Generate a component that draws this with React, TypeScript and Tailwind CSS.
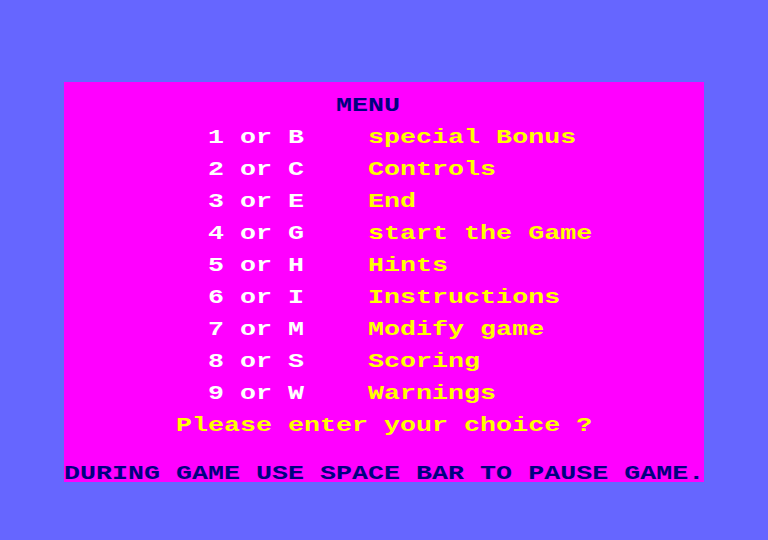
type Seg = { text: string; color: string }

const WHITE = 'text-white'
const YELLOW = 'text-[#ffff00]'
const NAVY = 'text-[#000080]'

const ITEMS: [string, string][] = [
  ['1 or B', 'special Bonus'],
  ['2 or C', 'Controls'],
  ['3 or E', 'End'],
  ['4 or G', 'start the Game'],
  ['5 or H', 'Hints'],
  ['6 or I', 'Instructions'],
  ['7 or M', 'Modify game'],
  ['8 or S', 'Scoring'],
  ['9 or W', 'Warnings'],
]

// 25 text rows of 40 columns, like the CPC's mode 1 screen
function buildRows(): Seg[][] {
  const rows: Seg[][] = Array.from({ length: 25 }, () => [])
  rows[1] = [{ text: ' '.repeat(17) + 'MENU', color: NAVY }]
  ITEMS.forEach(([key, label], i) => {
    rows[3 + i * 2] = [
      { text: ' '.repeat(9) + key, color: WHITE },
      { text: ' '.repeat(4) + label, color: YELLOW },
    ]
  })
  rows[21] = [{ text: ' '.repeat(7) + 'Please enter your choice ?', color: YELLOW }]
  rows[24] = [{ text: 'DURING GAME USE SPACE BAR TO PAUSE GAME.', color: NAVY }]
  return rows
}

export default function App() {
  const rows = buildRows()

  return (
    <div className="w-[768px] h-[540px] bg-[#6666ff] pt-[82px] pl-[64px]">
      <div
        className="w-[640px] h-[400px] bg-[#ff00ff] flex flex-col"
        style={{ fontFamily: '"Liberation Mono", monospace' }}
      >
        {rows.map((segs, r) => (
          // 21px mono = 12.6px cells, stretched to the 16px cells of the CPC font
          <div
            key={r}
            className="h-4 w-[504px] leading-4 whitespace-pre font-bold text-[21px] origin-left scale-x-[1.27]"
          >
            {segs.map((s, i) => (
              <span key={i} className={s.color}>
                {s.text}
              </span>
            ))}
          </div>
        ))}
      </div>
    </div>
  )
}
